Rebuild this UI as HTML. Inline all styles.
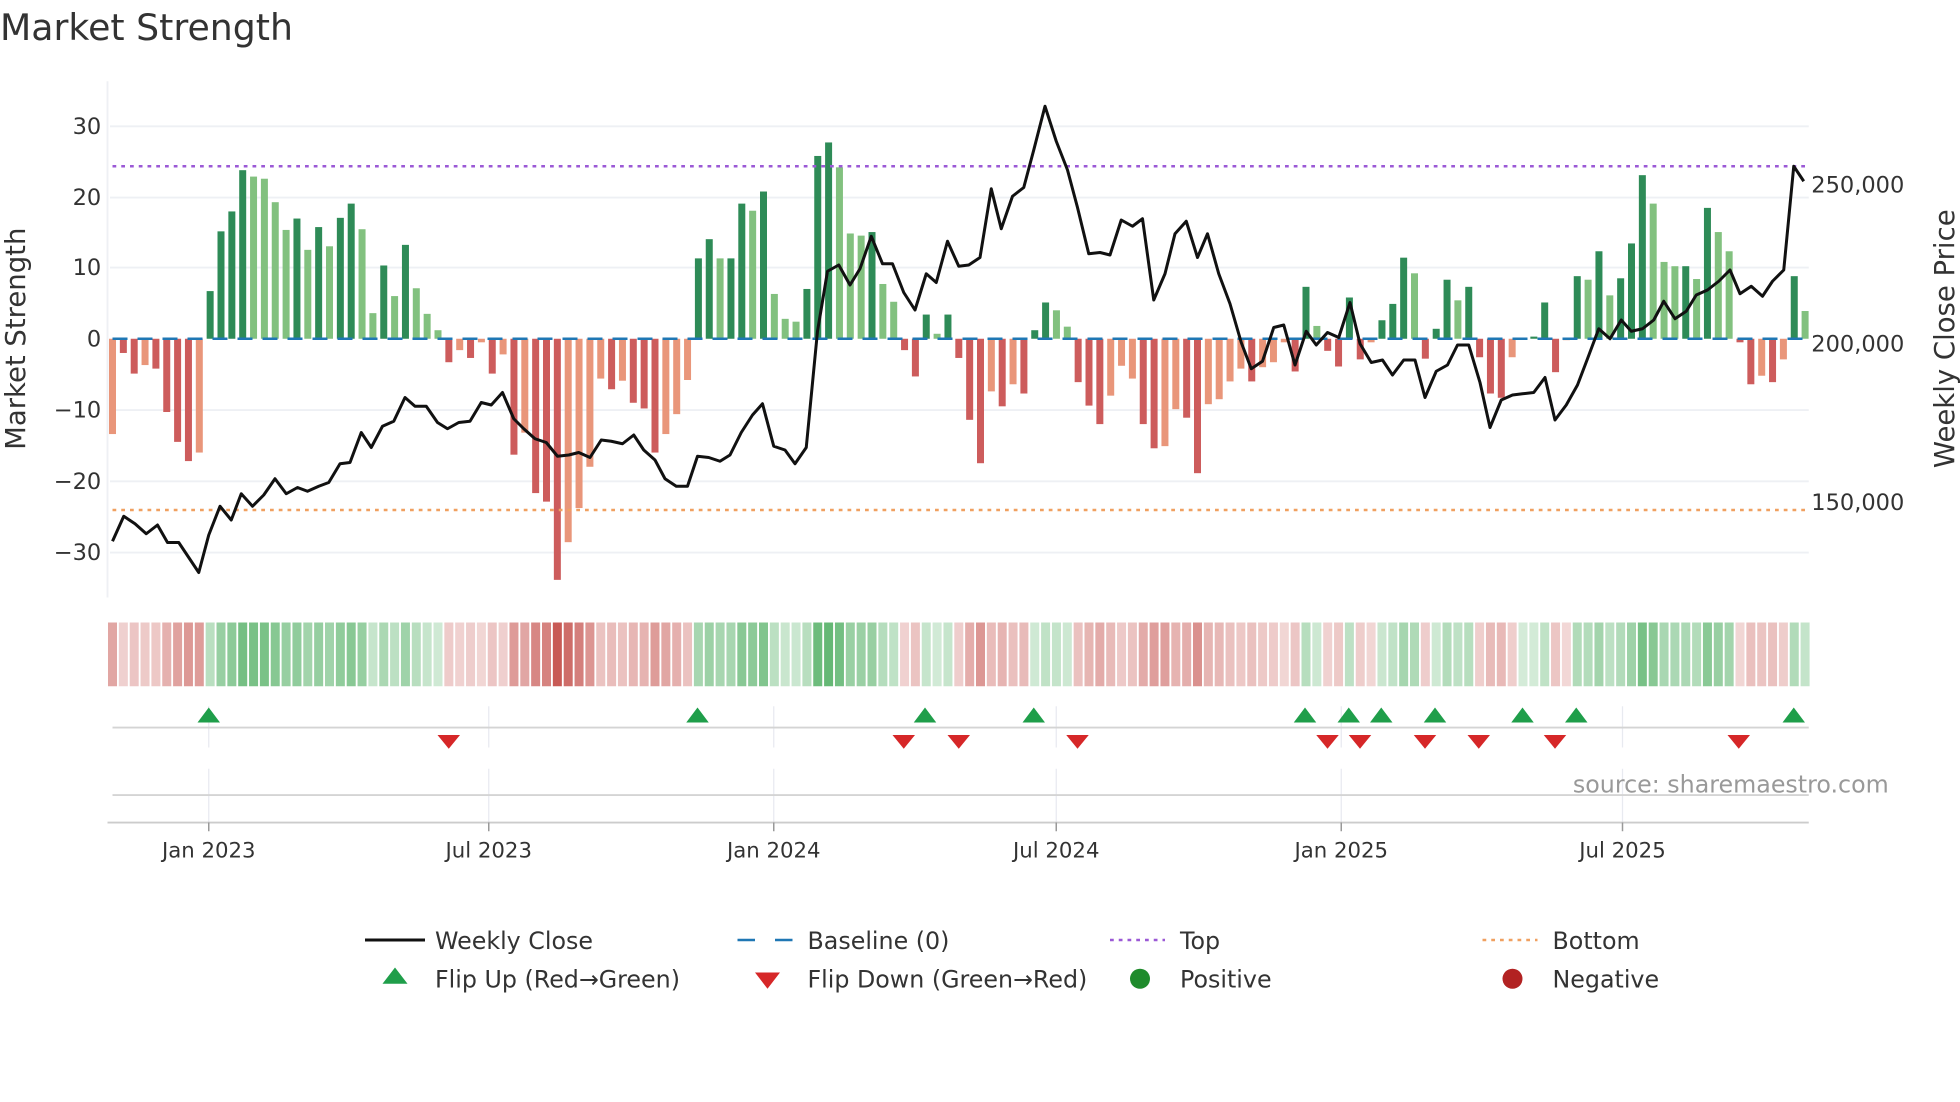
<!DOCTYPE html>
<html><head><meta charset="utf-8">
<style>
html,body{margin:0;padding:0;background:#fff;}
svg{display:block;font-family:"DejaVu Sans","Liberation Sans",sans-serif;}
</style></head>
<body>
<svg id="s" width="1960" height="1102" viewBox="0 0 1568 881.6" xmlns="http://www.w3.org/2000/svg">
<rect width="1568" height="882" fill="#fff"/>
<text x="0" y="32" font-size="29" fill="#333">Market Strength</text>
<g stroke="#eef0f4" stroke-width="1.5">
<line x1="88" x2="1447" y1="101" y2="101"/><line x1="88" x2="1447" y1="158" y2="158"/>
<line x1="88" x2="1447" y1="214" y2="214"/><line x1="88" x2="1447" y1="328" y2="328"/>
<line x1="88" x2="1447" y1="385" y2="385"/><line x1="88" x2="1447" y1="442" y2="442"/>
</g>
<line x1="86" x2="86" y1="65" y2="478" stroke="#eef0f4" stroke-width="1.5"/>
<g font-size="18" fill="#333" text-anchor="end">
<text x="81" y="107">30</text><text x="81" y="164">20</text><text x="81" y="220">10</text>
<text x="81" y="277">0</text><text x="81" y="334">−10</text><text x="81" y="391">−20</text><text x="81" y="448">−30</text>
</g>
<g font-size="18" fill="#333">
<text x="1449" y="154">250,000</text><text x="1449" y="281">200,000</text><text x="1449" y="408">150,000</text>
</g>
<text transform="translate(20,271) rotate(-90)" font-size="22" fill="#333" text-anchor="middle">Market Strength</text>
<text transform="translate(1563,271) rotate(-90)" font-size="22" fill="#333" text-anchor="middle">Weekly Close Price</text>
<g id="bars"></g>
<line x1="90" x2="1447" y1="271" y2="271" stroke="#1f77b4" stroke-width="2" stroke-dasharray="12,8"/>
<line x1="90" x2="1447" y1="133" y2="133" stroke="#9b59d6" stroke-width="2" stroke-dasharray="3,4"/>
<line x1="90" x2="1447" y1="408" y2="408" stroke="#f0a060" stroke-width="2" stroke-dasharray="3,4"/>
<polyline id="price" fill="none" stroke="#111" stroke-width="2.4" stroke-linejoin="round"/>
<g id="heat"></g>
<g stroke="#e8eaf0" stroke-width="1">
<line x1="167" x2="167" y1="565" y2="598"/><line x1="391" x2="391" y1="565" y2="598"/><line x1="619" x2="619" y1="565" y2="598"/>
<line x1="845" x2="845" y1="565" y2="598"/><line x1="1073" x2="1073" y1="565" y2="598"/><line x1="1298" x2="1298" y1="565" y2="598"/>
<line x1="167" x2="167" y1="615" y2="658"/><line x1="391" x2="391" y1="615" y2="658"/><line x1="619" x2="619" y1="615" y2="658"/>
<line x1="845" x2="845" y1="615" y2="658"/><line x1="1073" x2="1073" y1="615" y2="658"/><line x1="1298" x2="1298" y1="615" y2="658"/>
</g>
<line x1="90" x2="1447" y1="582" y2="582" stroke="#d4d4d4" stroke-width="1.5"/>
<line x1="90" x2="1447" y1="636" y2="636" stroke="#d4d4d4" stroke-width="1.5"/>
<line x1="86" x2="1447" y1="658" y2="658" stroke="#ccc" stroke-width="1.5"/>
<g stroke="#999" stroke-width="1.2">
<line x1="167" x2="167" y1="658" y2="665"/><line x1="391" x2="391" y1="658" y2="665"/><line x1="619" x2="619" y1="658" y2="665"/>
<line x1="845" x2="845" y1="658" y2="665"/><line x1="1073" x2="1073" y1="658" y2="665"/><line x1="1298" x2="1298" y1="658" y2="665"/>
</g>
<g id="marks"></g>
<g font-size="17" fill="#333" text-anchor="middle">
<text x="167" y="686">Jan 2023</text><text x="391" y="686">Jul 2023</text><text x="619" y="686">Jan 2024</text>
<text x="845" y="686">Jul 2024</text><text x="1073" y="686">Jan 2025</text><text x="1298" y="686">Jul 2025</text>
</g>
<text x="1511" y="634" font-size="19" fill="#999" text-anchor="end">source: sharemaestro.com</text>
<g font-size="19" fill="#333">
<line x1="292" x2="340" y1="752" y2="752" stroke="#111" stroke-width="2.4"/>
<text x="348" y="759">Weekly Close</text>
<line x1="590" x2="634" y1="752" y2="752" stroke="#1f77b4" stroke-width="2" stroke-dasharray="14,16"/>
<text x="646" y="759">Baseline (0)</text>
<line x1="888" x2="932" y1="752" y2="752" stroke="#9b59d6" stroke-width="2" stroke-dasharray="3,4"/>
<text x="944" y="759">Top</text>
<line x1="1186" x2="1230" y1="752" y2="752" stroke="#f0a060" stroke-width="2" stroke-dasharray="3,4"/>
<text x="1242" y="759">Bottom</text>
<polygon points="316,774 326,787 306,787" fill="#1f9e4a"/>
<text x="348" y="790">Flip Up (Red→Green)</text>
<polygon points="604,778 624,778 614,791" fill="#d62728"/>
<text x="646" y="790">Flip Down (Green→Red)</text>
<circle cx="912" cy="783" r="8" fill="#1f8b2c"/>
<text x="944" y="790">Positive</text>
<circle cx="1210" cy="783" r="8" fill="#b22222"/>
<text x="1242" y="790">Negative</text>
</g>
</svg>
<script>
var V=[-13.4,-2,-4.9,-3.7,-4.2,-10.3,-14.5,-17.2,-16,6.7,15.1,17.9,23.7,22.8,22.5,19.2,15.3,16.9,12.5,15.7,13,17,19,15.4,3.6,10.3,6,13.2,7.1,3.5,1.2,-3.3,-1.6,-2.7,-0.5,-4.9,-2.2,-16.3,-13.2,-21.7,-22.9,-33.9,-28.6,-23.8,-18,-5.6,-7.1,-5.9,-9,-9.8,-16,-13.4,-10.6,-5.8,11.3,14,11.3,11.3,19,18,20.7,6.3,2.8,2.4,7,25.7,27.6,24.1,14.8,14.5,15,7.7,5.2,-1.6,-5.3,3.4,0.7,3.4,-2.7,-11.4,-17.5,-7.4,-9.5,-6.4,-7.7,1.2,5.1,4,1.7,-6.1,-9.4,-12,-8,-3.8,-5.6,-12,-15.4,-15.1,-9.9,-11.1,-18.9,-9.2,-8.5,-6,-4.2,-6,-4,-3.3,-0.5,-4.6,7.3,1.8,-1.7,-3.9,5.8,-2.9,-0.5,2.6,4.9,11.4,9.2,-2.8,1.4,8.3,5.4,7.3,-2.6,-7.7,-8.3,-2.6,0.1,0.3,5.1,-4.7,-0.2,8.8,8.3,12.3,6.1,8.5,13.4,23,19,10.8,10.2,10.2,8.4,18.4,15,12.3,-0.5,-6.4,-5.2,-6.1,-2.9,8.8,3.9];
var L=[0,1,1,0,1,1,1,1,0,1,1,1,1,0,0,0,0,1,0,1,0,1,1,0,0,1,0,1,0,0,0,1,0,1,0,1,0,1,0,1,1,1,0,0,0,0,1,0,1,1,1,0,0,0,1,1,0,1,1,0,1,0,0,0,1,1,1,0,0,0,1,0,0,1,1,1,0,1,1,1,1,0,1,0,1,1,1,0,0,1,1,1,0,0,0,1,1,0,0,1,1,0,0,0,0,1,0,0,0,1,1,0,1,1,1,1,0,1,1,1,0,1,1,1,0,1,1,1,1,0,0,1,1,1,0,1,0,1,0,1,1,1,0,0,0,1,0,1,0,0,1,1,0,1,0,1,0];
var P=[[90,433],[99,413],[108,419],[117,427],[126,420],[134,434],[143,434],[151,446],[159,458],[167,428],[176,405],[185,416],[193,395],[202,405],[211,396],[220,383],[229,395],[238,390],[246,393],[255,389],[263,386],[272,371],[280,370],[289,346],[297,358],[306,341],[315,337],[324,318],[332,325],[341,325],[350,338],[358,343],[367,338],[376,337],[385,322],[393,324],[402,314],[411,335],[419,343],[428,351],[437,354],[446,365],[455,364],[463,362],[472,366],[481,352],[489,353],[498,355],[507,348],[515,360],[524,368],[532,383],[541,389],[550,389],[558,365],[567,366],[576,369],[584,364],[593,346],[602,332],[610,323],[619,357],[628,360],[636,371],[645,358],[654,265],[662,217],[671,212],[680,228],[688,215],[697,189],[706,211],[714,211],[723,234],[732,248],[741,219],[749,226],[758,193],[767,213],[775,212],[784,206],[793,151],[801,183],[810,157],[819,150],[827,120],[836,85],[845,113],[854,136],[862,166],[871,203],[880,202],[888,204],[897,176],[906,181],[914,175],[923,240],[932,219],[940,187],[949,177],[958,206],[966,187],[975,219],[984,243],[993,274],[1001,295],[1010,289],[1019,262],[1027,260],[1036,292],[1045,265],[1053,276],[1062,266],[1071,270],[1080,242],[1088,275],[1097,290],[1106,288],[1114,300],[1123,288],[1132,288],[1140,318],[1149,297],[1158,292],[1166,276],[1175,276],[1184,306],[1192,342],[1201,320],[1210,316],[1218,315],[1227,314],[1236,302],[1244,336],[1253,324],[1262,308],[1270,287],[1279,263],[1288,271],[1297,256],[1305,265],[1314,263],[1323,256],[1331,241],[1340,255],[1349,249],[1357,236],[1366,232],[1375,225],[1384,216],[1392,235],[1401,229],[1410,237],[1418,225],[1427,216],[1435,133],[1443,145]];
var NS="http://www.w3.org/2000/svg";
function el(t,a,p){var e=document.createElementNS(NS,t);for(var k in a)e.setAttribute(k,a[k]);p.appendChild(e);return e;}
var bars=document.getElementById('bars'),heat=document.getElementById('heat');
function mix(c,t){var r=Math.round(255+(c[0]-255)*t),g=Math.round(255+(c[1]-255)*t),b=Math.round(255+(c[2]-255)*t);return 'rgb('+r+','+g+','+b+')';}
for(var i=0;i<V.length;i++){
 var v=V[i],x=90+8.68*i,y0=271,h=Math.abs(v)*5.69,col;
 if(v>=0)col=L[i]?'#2e8b57':'#82c17f';else col=L[i]?'#cd5c5c':'#e9967a';
 el('rect',{x:x-2.8,y:v>=0?y0-h:y0,width:5.6,height:h,fill:col},bars);
 var t=0.22+0.7*Math.min(1,Math.abs(v)/34);
 el('rect',{x:x-3.6,y:498,width:7.2,height:51,fill:mix(v>=0?[60,165,80]:[195,75,70],t)},heat);
}
document.getElementById('price').setAttribute('points',P.map(function(p){return p.join(',')}).join(' '));
var m=document.getElementById('marks');
[167,558,740,827,1044,1079,1105,1148,1218,1261,1435].forEach(function(x){el('polygon',{points:(x)+',566 '+(x+9)+',578 '+(x-9)+',578',fill:'#1f9e4a'},m);});
[359,723,767,862,1062,1088,1140,1183,1244,1391].forEach(function(x){el('polygon',{points:(x-9)+',588 '+(x+9)+',588 '+x+',599',fill:'#d62728'},m);});
</script>
</body></html>
